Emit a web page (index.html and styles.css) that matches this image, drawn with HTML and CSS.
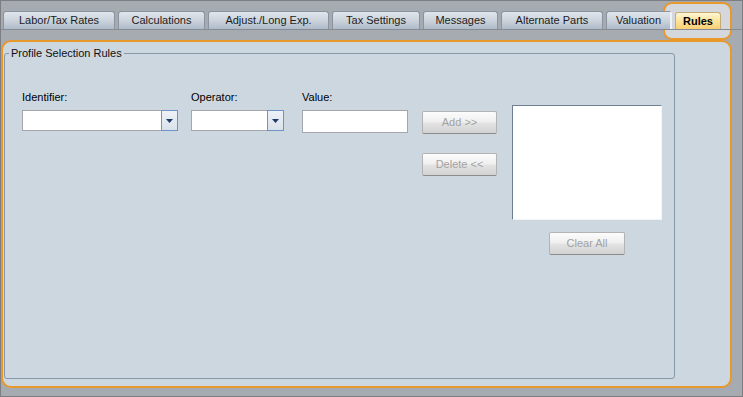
FILE: index.html
```html
<!DOCTYPE html>
<html>
<head>
<meta charset="utf-8">
<link rel="stylesheet" href="styles.css">
</head>
<body>
<div class="window">
  <div class="tab-highlight"></div>
  <div class="tabstrip">
    <div class="tab t1">Labor/Tax Rates</div>
    <div class="tab t2">Calculations</div>
    <div class="tab t3">Adjust./Long Exp.</div>
    <div class="tab t4">Tax Settings</div>
    <div class="tab t5">Messages</div>
    <div class="tab t6">Alternate Parts</div>
    <div class="tab t7">Valuation</div>
    <div class="tab t8 active">Rules</div>
  </div>
  <div class="panel">
    <fieldset class="group">
      <legend>Profile Selection Rules</legend>
      <div class="row">
        <div class="col col-id">
          <div class="label">Identifier:</div>
          <div class="combo">
            <div class="combo-field"></div>
            <div class="combo-drop"><svg width="7" height="4" viewBox="0 0 7 4"><polygon points="0,0 7,0 3.5,4" fill="#1d3a68"/></svg></div>
          </div>
        </div>
        <div class="col col-op">
          <div class="label">Operator:</div>
          <div class="combo">
            <div class="combo-field"></div>
            <div class="combo-drop"><svg width="7" height="4" viewBox="0 0 7 4"><polygon points="0,0 7,0 3.5,4" fill="#1d3a68"/></svg></div>
          </div>
        </div>
        <div class="col col-val">
          <div class="label">Value:</div>
          <div class="textbox"></div>
        </div>
        <div class="col col-btn">
          <div class="btn btn-add">Add &gt;&gt;</div>
          <div class="btn btn-del">Delete &lt;&lt;</div>
        </div>
        <div class="col col-list">
          <div class="listbox"></div>
          <div class="btn btn-clear">Clear All</div>
        </div>
      </div>
    </fieldset>
  </div>
</div>
</body>
</html>
```
FILE: styles.css
```css
html, body {
  margin: 0;
  padding: 0;
  background: #a6aab1;
}
body {
  font-family: "Liberation Sans", Arial, sans-serif;
  font-size: 11px;
  color: #000;
}
.window {
  width: 743px;
  height: 397px;
  box-sizing: border-box;
  border: 1px solid #7c7e82;
  background: #a6aab1;
  position: relative;
  display: flex;
  flex-direction: column;
}
.tab-highlight {
  position: absolute;
  left: 662px;
  top: 1px;
  width: 69px;
  height: 38px;
  box-sizing: border-box;
  border: 2px solid #e9982c;
  border-radius: 9px;
  background: #d4d8dd;
  z-index: 0;
}
.tabstrip {
  position: relative;
  z-index: 1;
  height: 28px;
  border-bottom: 1px solid #878b92;
  display: flex;
  align-items: flex-end;
  padding-left: 2px;
  gap: 3px;
  margin-bottom: 10px;
}
.tab {
  height: 18px;
  box-sizing: border-box;
  border: 1px solid #8a939e;
  border-bottom: none;
  border-radius: 3px 3px 0 0;
  background: linear-gradient(#e1e6ec, #c9d1da 55%, #aebbca);
  color: #1c1c1c;
  text-align: center;
  line-height: 17px;
  white-space: nowrap;
}
.t1 { width: 112px; }
.t2 { width: 87px; }
.t3 { width: 121px; }
.t4 { width: 88px; }
.t5 { width: 75px; }
.t6 { width: 102px; }
.t7 { width: 66px; border-right: 2px solid #eef3fa; }
.t8 { width: 46px; }
.tab.active {
  height: 17px;
  background: linear-gradient(#fff6d6, #fde39a 50%, #f9cf73);
  border-color: #c5ab78;
  font-weight: bold;
  color: #000;
  line-height: 16px;
}
.panel {
  width: 731px;
  height: 348px;
  box-sizing: border-box;
  border: 2px solid #e9982c;
  border-radius: 10px;
  background: #cdd7e0;
  padding: 0 0 0 1px;
  position: relative;
  z-index: 1;
}
.group {
  margin: 5px 0 0 0;
  padding: 0;
  width: 671px;
  height: 332px;
  box-sizing: border-box;
  border: 1px solid #8797a8;
  border-radius: 3px;
  min-width: 0;
}
.group legend {
  margin-left: 4px;
  padding: 0 2px;
  line-height: 13px;
  color: #101010;
}
.row {
  display: flex;
  align-items: flex-start;
  padding: 31px 0 0 17px;
}
.col {
  display: flex;
  flex-direction: column;
}
.col-id { width: 156px; margin-right: 13px; }
.col-op { width: 93px; margin-right: 18px; }
.col-val { width: 106px; margin-right: 14px; }
.col-btn { width: 75px; margin-right: 15px; padding-top: 20px; }
.col-list { width: 150px; padding-top: 14px; align-items: center; }
.label {
  height: 13px;
  line-height: 13px;
  margin-bottom: 6px;
  white-space: nowrap;
}
.combo {
  display: flex;
  height: 21px;
}
.combo-field {
  flex: 1;
  box-sizing: border-box;
  border: 1px solid #a3a6ab;
  border-right: none;
  background: #fff;
}
.combo-drop {
  width: 17px;
  box-sizing: border-box;
  border: 1px solid #6f93c8;
  background: linear-gradient(#eef2f7, #d9e1eb);
  display: flex;
  align-items: center;
  justify-content: center;
  padding-top: 1px;
}
.combo-drop svg { display: block; }
.textbox {
  height: 23px;
  box-sizing: border-box;
  border: 1px solid #a3a6ab;
  background: #fff;
}
.btn {
  height: 23px;
  box-sizing: border-box;
  border: 1px solid #b3b3b3;
  border-bottom-color: #8c8c8c;
  border-radius: 2px;
  background: linear-gradient(#fcfcfc, #f0f0f0 45%, #e2e2e2 55%, #d2d2d2);
  color: #a2a2a2;
  text-align: center;
  line-height: 21px;
  white-space: nowrap;
}
.btn-add, .btn-del { width: 75px; }
.btn-del { margin-top: 19px; }
.listbox {
  width: 150px;
  height: 115px;
  box-sizing: border-box;
  border: 1px solid #f2f4f6;
  border-top-color: #6e7f92;
  border-left-color: #6e7f92;
  background: #fff;
}
.btn-clear {
  width: 76px;
  margin-top: 12px;
}
```
